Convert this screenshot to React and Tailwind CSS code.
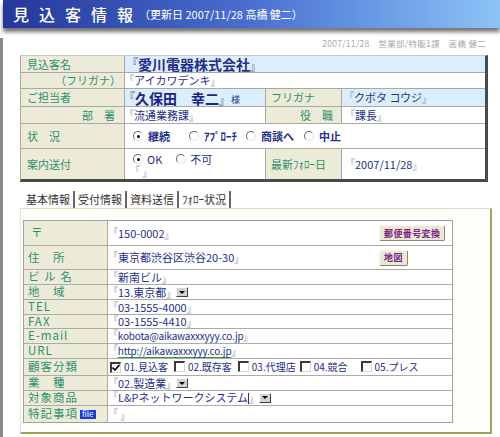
import React from "react";

const FONT = "font-['Noto_Sans_CJK_JP',sans-serif]";

// Corner-bracket wrapper used around every stored value
function Q({ children, big = false }) {
  const b = big ? "text-[11px]" : "text-[9px]";
  return (
    <span className="whitespace-nowrap">
      <span className={`${b} text-[#6e6e88] relative -top-[3px] -ml-[4px]`}>『</span>
      {children}
      <span className={`${b} text-[#6e6e88] relative top-[1px]`}>』</span>
    </span>
  );
}

function Radio({ on }) {
  return (
    <span className="relative inline-block w-[10px] h-[10px] rounded-full border border-t-[#6a6a6a] border-l-[#6a6a6a] border-r-[#e2e2e2] border-b-[#e2e2e2] bg-white shrink-0">
      {on && <span className="absolute left-[2.5px] top-[2.5px] w-[3px] h-[3px] rounded-full bg-black" />}
    </span>
  );
}

function Check({ on }) {
  return (
    <span className="relative inline-flex w-[11px] h-[11px] border-t-2 border-l-2 border-t-[#3a3a3a] border-l-[#3a3a3a] border-r border-b border-r-[#d8d8d8] border-b-[#d8d8d8] bg-white shrink-0 items-center justify-center">
      {on && (
        <svg width="8" height="7" viewBox="0 0 8 7">
          <path d="M0.5 3.5 L3 6 L7.5 0.8" fill="none" stroke="#000" strokeWidth="1.6" />
        </svg>
      )}
    </span>
  );
}

function DropBtn() {
  return (
    <span className="inline-flex w-[12px] h-[10px] bg-[#d6d3ce] border border-t-white border-l-white border-r-[#404040] border-b-[#404040] items-center justify-center ml-[1px] shrink-0">
      <svg width="6" height="3" viewBox="0 0 6 3">
        <path d="M0 0h6L3 3z" fill="#000" />
      </svg>
    </span>
  );
}

function Btn({ children }) {
  return (
    <span className="inline-flex h-[16px] items-center px-[4px] bg-[#ebe8d6] border border-t-[#f8f8f0] border-l-[#f8f8f0] border-r-[#8a8670] border-b-[#8a8670] rounded-[2px] text-[9px] font-bold text-[#7a1f86] tracking-[0.4px] leading-none">
      {children}
    </span>
  );
}

const LBL = "bg-[#ecebd8] text-[#2f8f70] text-[11px] flex items-center border-r border-[#a8a8a8]";
const VAL = "text-[#262f88] text-[11px] flex items-center";
const ROW = "flex border-b border-[#a8a8a8]";

function InnerRow({ h, label, children, last = false, extra = null }) {
  return (
    <div className={`flex ${last ? "" : "border-b border-[#ababab]"}`} style={{ height: h }}>
      <div className="w-[84px] shrink-0 bg-[#ecebd8] border-r border-[#ababab] flex items-center pl-[4px] text-[11.5px] text-[#2f8f70] tracking-[1px] whitespace-nowrap">
        {label}
      </div>
      <div className="flex-1 flex items-center pl-[5px] text-[11px] text-[#262f88] bg-white">
        <div className="flex-1 flex items-center">{children}</div>
        {extra !== null && <div className="w-[73px] shrink-0">{extra}</div>}
      </div>
    </div>
  );
}

export default function App() {
  return (
    <div className={`w-[500px] h-[437px] bg-white overflow-hidden ${FONT} leading-none`}>
      {/* title bar */}
      <div className="relative z-10 ml-[3px] h-[28px] bg-gradient-to-r from-[#26379a] via-[#4a6fd0] to-[#8cc3f5] shadow-[0_4px_4px_rgba(0,0,0,0.55)] flex items-center pl-[10px] text-white">
        <span className="flex gap-[10px] text-[16px] font-medium">
          {["見", "込", "客", "情", "報"].map((c) => (
            <span key={c} className="w-[16px]">{c}</span>
          ))}
        </span>
        <span className="text-[11px] ml-[6px]">（更新日 2007/11/28 高橋 健二）</span>
      </div>

      <div className="border-l-[3px] border-[#8c8c8c] h-[409px] pl-[17px]">
        {/* updater line */}
        <div className="h-[11px] mt-[10px] pr-[14px] flex justify-end items-center text-[8.5px] text-[#a8a8a8] tracking-[0.3px]">
          2007/11/28　営業部/特販1課　高橋 健二
        </div>

        {/* customer summary table */}
        <div className="mt-[6px] w-[468px] border-t border-l border-t-[#c8c8c8] border-l-[#a8a8a8] border-r-[3px] border-b-[3px] border-r-[#4a4a4a] border-b-[#4a4a4a]">
          <div className={`${ROW} h-[17px]`}>
            <div className={`${LBL} w-[104px] pl-[6px]`}>見込客名</div>
            <div className={`${VAL} flex-1 bg-[#dceefb] pl-[6px] text-[14px] font-bold text-[#1c2585]`}>
              <Q big>愛川電器株式会社</Q>
            </div>
          </div>
          <div className={`${ROW} h-[16px]`}>
            <div className={`${LBL} w-[104px] justify-end pr-[3px]`}>（フリガナ）</div>
            <div className={`${VAL} flex-1 pl-[4px] text-[10px]`}>
              <Q>アイカワデンキ</Q>
            </div>
          </div>
          <div className={`${ROW} h-[18px]`}>
            <div className={`${LBL} w-[104px] pl-[6px]`}>ご担当者</div>
            <div className={`${VAL} w-[141px] bg-[#dceefb] border-r border-[#a8a8a8] pl-[3px]`}>
              <span className="text-[14px] font-bold text-[#1c2585]">
                <Q big>久保田　幸二</Q>
              </span>
              <span className="text-[9px] ml-[1px] mt-[3px] text-[#262f88]">様</span>
            </div>
            <div className={`${LBL} w-[76px] pl-[5px] bg-[#dceefb]`}>フリガナ</div>
            <div className={`${VAL} flex-1 bg-[#dceefb] pl-[7px] text-[10px]`}>
              <Q>クボタ コウジ</Q>
            </div>
          </div>
          <div className={`${ROW} h-[17px]`}>
            <div className={`${LBL} w-[104px] justify-end pr-[9px]`}>部　署</div>
            <div className={`${VAL} w-[141px] border-r border-[#a8a8a8] pl-[4px]`}>
              <Q>流通業務課</Q>
            </div>
            <div className={`${LBL} w-[76px] justify-end pr-[8px]`}>役　職</div>
            <div className={`${VAL} flex-1 pl-[8px]`}>
              <Q>課長</Q>
            </div>
          </div>
          <div className={`${ROW} h-[25px]`}>
            <div className={`${LBL} w-[104px] pl-[6px]`}>状　況</div>
            <div className={`${VAL} flex-1 pl-[8px] font-bold text-[#1c2585]`}>
              <Radio on />
              <span className="ml-[5px]">継続</span>
              <span className="ml-[19px]"><Radio /></span>
              <span className="ml-[5px]">ｱﾌﾟﾛｰﾁ</span>
              <span className="ml-[9px]"><Radio /></span>
              <span className="ml-[5px]">商談へ</span>
              <span className="ml-[10px]"><Radio /></span>
              <span className="ml-[5px]">中止</span>
            </div>
          </div>
          <div className="flex h-[30px]">
            <div className={`${LBL} w-[104px] pl-[6px]`}>案内送付</div>
            <div className="w-[141px] border-r border-[#a8a8a8] pl-[8px] pt-[4px] text-[11px] text-[#262f88]">
              <div className="flex items-center h-[12px]">
                <Radio on />
                <span className="ml-[4px]">OK</span>
                <span className="ml-[14px]"><Radio /></span>
                <span className="ml-[4px]">不可</span>
              </div>
              <div className="h-[10px] mt-[1px] pl-[2px]">
                <Q> </Q>
              </div>
            </div>
            <div className={`${LBL} w-[76px] pl-[5px]`}>最新ﾌｫﾛｰ日</div>
            <div className={`${VAL} flex-1 pl-[8px]`}>
              <Q>2007/11/28</Q>
            </div>
          </div>
        </div>

        {/* tabs */}
        <div className="mt-[8px] h-[18px] flex items-center pl-[3px] text-[11px] text-[#333]">
          {["基本情報", "受付情報", "資料送信", "ﾌｫﾛｰ状況"].map((t) => (
            <span key={t} className="px-[3px] h-[17px] flex items-center border-r-2 border-[#666]">
              {t}
            </span>
          ))}
        </div>

        {/* tab body */}
        <div className="w-[472px] h-[226px] bg-[#fdfdf9] border-t border-l border-t-[#dedcc8] border-l-[#e6e4d6] border-r-2 border-b-2 border-r-[#a59e5c] border-b-[#a59e5c] pl-[2px] pt-[11px]">
          <div className="w-[430px] border border-[#a0a0a0]">
            <InnerRow h={25} label={<span className="pl-[3px]">〒</span>} extra={<Btn>郵便番号変換</Btn>}>
              <Q>150-0002</Q>
            </InnerRow>
            <InnerRow h={24} label="住　所" extra={<Btn>地図</Btn>}>
              <Q>東京都渋谷区渋谷20-30</Q>
            </InnerRow>
            <InnerRow h={15} label="ビ ル 名">
              <Q>新南ビル</Q>
            </InnerRow>
            <InnerRow h={15} label="地　域">
              <Q>13.東京都</Q>
              <DropBtn />
            </InnerRow>
            <InnerRow h={15} label="TEL">
              <Q>03-1555-4000</Q>
            </InnerRow>
            <InnerRow h={14} label="FAX">
              <Q>03-1555-4410</Q>
            </InnerRow>
            <InnerRow h={15} label="E-mail">
              <span className="text-[10px] tracking-[-0.2px]">
                <Q>kobota@aikawaxxxyyy.co.jp</Q>
              </span>
            </InnerRow>
            <InnerRow h={15} label="URL">
              <span className="text-[10px] tracking-[-0.2px]">
                <Q>
                  <span className="underline decoration-[#2f9a3a] underline-offset-[2px]">http://aikawaxxxyyy.co.jp</span>
                </Q>
              </span>
            </InnerRow>
            <InnerRow h={17} label="顧客分類">
              <span className="flex items-center -ml-[3px] text-[10px]">
                <Check on />
                <span className="ml-[3px]">01.見込客</span>
                <span className="ml-[6px]"><Check /></span>
                <span className="ml-[3px]">02.既存客</span>
                <span className="ml-[6px]"><Check /></span>
                <span className="ml-[3px]">03.代理店</span>
                <span className="ml-[4px]"><Check /></span>
                <span className="ml-[3px]">04.競合</span>
                <span className="ml-[13px]"><Check /></span>
                <span className="ml-[3px]">05.プレス</span>
              </span>
            </InnerRow>
            <InnerRow h={15} label="業　種">
              <Q>02.製造業</Q>
              <DropBtn />
            </InnerRow>
            <InnerRow h={15} label="対象商品">
              <Q>
                L&amp;Pネットワークシステム<span className="inline-block w-[1px] h-[11px] bg-[#262f88] align-middle" />
              </Q>
              <DropBtn />
            </InnerRow>
            <InnerRow
              h={16}
              last
              label={
                <span className="flex items-center">
                  特記事項
                  <span className="ml-[2px] bg-[#1d3ccf] text-white text-[8px] tracking-normal px-[2px] h-[9px] flex items-center">file</span>
                </span>
              }
            >
              <Q> </Q>
            </InnerRow>
          </div>
        </div>
      </div>
    </div>
  );
}
